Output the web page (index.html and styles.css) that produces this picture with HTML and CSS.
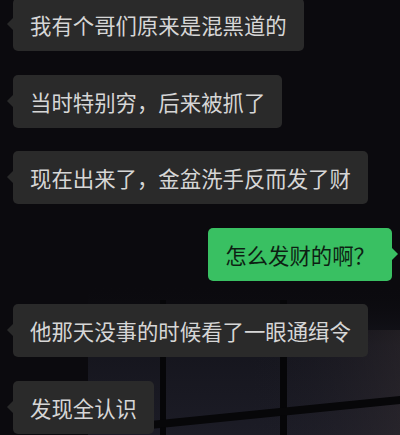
FILE: index.html
```html
<!DOCTYPE html>
<html lang="zh-CN">
<head>
    <meta charset="UTF-8">
    <meta name="viewport" content="width=device-width, initial-scale=1.0">
    <title>聊天记录</title>
    <link rel="stylesheet" href="styles.css">
</head>
<body>
    <div class="pantalla">
        <!-- Fondo: ventana de noche -->
        <svg class="fondo" width="400" height="435" viewBox="0 0 400 435">
            <defs>
                <linearGradient id="cristal" x1="0" y1="0" x2="0" y2="1">
                    <stop offset="0" stop-color="#0b0a0e" stop-opacity="0"/>
                    <stop offset="0.4" stop-color="#15151d"/>
                    <stop offset="1" stop-color="#1c1c26"/>
                </linearGradient>
                <linearGradient id="brillo" x1="0" y1="0" x2="1" y2="0">
                    <stop offset="0" stop-color="#1c1c26" stop-opacity="0"/>
                    <stop offset="1" stop-color="#352e31" stop-opacity="0.45"/>
                </linearGradient>
            </defs>
            <rect width="400" height="435" fill="#0b0a0e"/>
            <rect x="88" y="285" width="312" height="150" fill="url(#cristal)"/>
            <rect x="250" y="330" width="150" height="105" fill="url(#brillo)"/>
            <rect x="160" y="300" width="6" height="135" fill="#060608"/>
            <rect x="280" y="300" width="7" height="135" fill="#060608"/>
            <polygon points="150,421 400,396 400,404 150,429" fill="#070709"/>
        </svg>

        <div class="chat">
            <div class="fila">
                <div class="burbuja">我有个哥们原来是混黑道的</div>
            </div>
            <div class="fila">
                <div class="burbuja">当时特别穷，后来被抓了</div>
            </div>
            <div class="fila">
                <div class="burbuja">现在出来了，金盆洗手反而发了财</div>
            </div>
            <div class="fila propia">
                <div class="burbuja verde">怎么发财的啊？</div>
            </div>
            <div class="fila">
                <div class="burbuja">他那天没事的时候看了一眼通缉令</div>
            </div>
            <div class="fila">
                <div class="burbuja">发现全认识</div>
            </div>
        </div>
    </div>
</body>
</html>
```

FILE: styles.css
```css
body {
    margin: 0;
    padding: 0;
    background-color: #0b0a0e;
    font-family: "Noto Sans CJK SC", "Noto Sans", sans-serif;
}

.pantalla {
    position: relative;
    width: 400px;
    height: 435px;
    overflow: hidden;
}

.fondo {
    position: absolute;
    top: 0;
    left: 0;
    z-index: 0;
}

.chat {
    position: relative;
    z-index: 1;
    display: flex;
    flex-direction: column;
    gap: 23.5px;
    padding: 0 8px 0 13px;
    margin-top: -2px;
}

.fila {
    display: flex;
}

.fila.propia {
    justify-content: flex-end;
}

.burbuja {
    position: relative;
    background-color: #2a2a2a;
    color: #d6d6d6;
    font-size: 21.4px;
    line-height: 29px;
    padding: 12px 17px;
    border-radius: 5px;
    white-space: nowrap;
}

.burbuja::before {
    content: "";
    position: absolute;
    top: 20px;
    left: -6px;
    border-top: 6px solid transparent;
    border-bottom: 6px solid transparent;
    border-right: 6px solid #2a2a2a;
}

.verde {
    background-color: #39c062;
    color: #0d1f13;
}

.verde::before {
    left: auto;
    right: -6px;
    border-right: none;
    border-left: 6px solid #39c062;
}
```
